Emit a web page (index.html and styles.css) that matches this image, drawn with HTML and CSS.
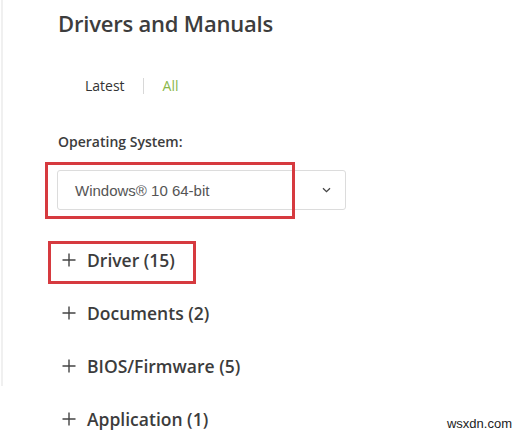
FILE: index.html
```html
<!DOCTYPE html>
<html>
<head>
<meta charset="utf-8">
<link rel="stylesheet" href="styles.css">
</head>
<body>
<div class="page">
  <div class="rail"></div>
  <main class="content">
    <h1 class="title">Drivers and Manuals</h1>
    <div class="tabs">
      <span class="tab">Latest</span>
      <span class="sep"></span>
      <span class="tab active">All</span>
    </div>
    <div class="label">Operating System:</div>
    <div class="select-wrap">
      <div class="select">
        <span class="select-text">Windows® 10 64-bit</span>
        <svg class="chev" width="9" height="6" viewBox="0 0 9 6"><path d="M1 1.2 L4.5 4.6 L8 1.2" fill="none" stroke="#444" stroke-width="1.3"/></svg>
      </div>
      <div class="mark mark-os"></div>
    </div>
    <ul class="acc">
      <li class="acc-item"><svg class="plus" width="14" height="14" viewBox="0 0 14 14"><path d="M7 0.5 V13.5 M0.5 7 H13.5" stroke="#444" stroke-width="1.4" fill="none"/></svg><span class="acc-label">Driver (15)</span><div class="mark mark-driver"></div></li>
      <li class="acc-item"><svg class="plus" width="14" height="14" viewBox="0 0 14 14"><path d="M7 0.5 V13.5 M0.5 7 H13.5" stroke="#444" stroke-width="1.4" fill="none"/></svg><span class="acc-label">Documents (2)</span></li>
      <li class="acc-item"><svg class="plus" width="14" height="14" viewBox="0 0 14 14"><path d="M7 0.5 V13.5 M0.5 7 H13.5" stroke="#444" stroke-width="1.4" fill="none"/></svg><span class="acc-label">BIOS/Firmware (5)</span></li>
      <li class="acc-item"><svg class="plus" width="14" height="14" viewBox="0 0 14 14"><path d="M7 0.5 V13.5 M0.5 7 H13.5" stroke="#444" stroke-width="1.4" fill="none"/></svg><span class="acc-label">Application (1)</span></li>
    </ul>
  </main>
</div>
<div class="watermark">wsxdn.com</div>
</body>
</html>
```
FILE: styles.css
```css
html, body {
  margin: 0;
  padding: 0;
  background: #ffffff;
  width: 524px;
  height: 435px;
  overflow: hidden;
}
body {
  font-family: "Open Sans", "Liberation Sans", sans-serif;
  color: #3c3c3c;
  position: relative;
}
.page {
  display: flex;
}
.rail {
  width: 0;
  height: 386px;
  margin-left: 1px;
  border-left: 2px solid #f0f0f0;
}
.content {
  padding-left: 55px;
  padding-top: 8px;
  flex: 1;
}
.title {
  margin: 0;
  font-family: "Open Sans", sans-serif;
  font-weight: 600;
  font-size: 22px;
  line-height: 30px;
  color: #3d3d3d;
  letter-spacing: -0.2px;
}
.tabs {
  display: flex;
  align-items: center;
  margin-top: 40px;
  padding-left: 27px;
  height: 16px;
}
.tab {
  font-size: 14px;
  line-height: 16px;
  color: #333;
}
.tab.active {
  color: #8ab84a;
}
.sep {
  width: 1px;
  height: 16px;
  background: #d8d8d8;
  margin: 0 19px 0 18px;
}
.label {
  margin-top: 40px;
  font-size: 14px;
  font-weight: 600;
  line-height: 16px;
  color: #3c3c3c;
}
.select-wrap {
  position: relative;
  margin-top: 20px;
}
.select {
  box-sizing: border-box;
  width: 289px;
  height: 40px;
  margin-left: -1px;
  border: 1px solid #dcdcdc;
  border-radius: 3px;
  display: flex;
  align-items: center;
  justify-content: space-between;
  padding: 0 14px 0 17px;
}
.select-text {
  font-family: "Liberation Sans", Arial, sans-serif;
  font-size: 15px;
  color: #555;
}
.chev {
  display: block;
}
.mark {
  position: absolute;
  box-sizing: border-box;
  border: 3px solid #d63a3f;
}
.mark-os {
  left: -13px;
  top: -8px;
  width: 250px;
  height: 57px;
}
.acc {
  list-style: none;
  margin: 23px 0 0 0;
  padding: 0;
}
.acc-item {
  position: relative;
  display: flex;
  align-items: center;
  height: 53px;
  margin-left: 4px;
}
.plus {
  display: block;
  flex: none;
  margin-right: 11px;
}
.acc-label {
  font-size: 17.5px;
  font-weight: 600;
  color: #3c3c3c;
}
.mark-driver {
  left: -14px;
  top: 8px;
  width: 148px;
  height: 43px;
}
.watermark {
  position: absolute;
  right: 12px;
  bottom: 4px;
  font-family: "Liberation Sans", Arial, sans-serif;
  font-size: 13px;
  color: #222;
}
```
